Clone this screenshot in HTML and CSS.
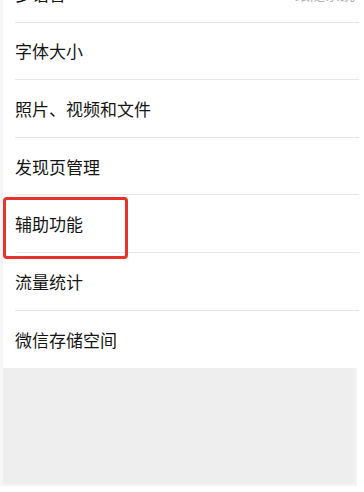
FILE: index.html
```html
<!DOCTYPE html>
<html>
  <head>
    <meta charset="utf-8">
    <title>设置</title>
    <link rel="stylesheet" href="styles.css">
  </head>
  <body>
    <section class="screen">
        <ul class="menu">
            <li class="item"><span>多语言</span><span class="value">跟随系统</span></li>
            <li class="item"><span>字体大小</span></li>
            <li class="item"><span>照片、视频和文件</span></li>
            <li class="item"><span>发现页管理</span></li>
            <li class="item marked"><span>辅助功能</span></li>
            <li class="item"><span>流量统计</span></li>
            <li class="item last"><span>微信存储空间</span></li>
        </ul>
        <div class="blank"></div>
    </section>
  </body>
</html>
```
FILE: styles.css
```css
html, body {
    margin: 0;
    padding: 0;
    background: #fff;
    overflow: hidden;
}
body {
    width: 364px;
    height: 492px;
    font-family: "Noto Sans CJK SC", "Liberation Sans", sans-serif;
}
.screen {
    width: 356px;
    border-left: 3px solid #f6f6f6;
}
.menu {
    list-style: none;
    margin: -35px 0 0 0;
    padding: 0 0 0 12px;
    background: #fff;
}
.item {
    position: relative;
    display: flex;
    align-items: center;
    justify-content: space-between;
    height: 57.6px;
    border-bottom: 1px solid #e8e8e8;
    box-sizing: border-box;
    font-size: 17px;
    color: #161616;
}
.item.last {
    border-bottom: none;
}
.value {
    font-size: 15px;
    color: #b5b5b5;
    padding-right: 4px;
}
.marked::before {
    /* red annotation box round the row */
    content: "";
    position: absolute;
    left: -12px;
    top: 2px;
    width: 119px;
    height: 56px;
    border: 3px solid #e8332d;
    border-radius: 4px;
}
.blank {
    height: 116px;
    width: 352px;
    background: #eeeeee;
    border-bottom: 2px solid #f4f4f4;
    border-right: 2px solid #f4f4f4;
}
```
